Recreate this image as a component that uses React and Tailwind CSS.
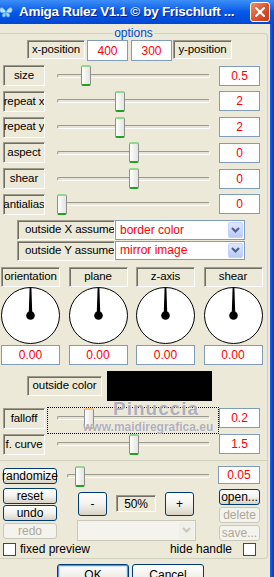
import React from 'react';

const sliders = [
  { label: 'size', thumb: 81, value: '0.5' },
  { label: 'repeat x', thumb: 115, value: '2' },
  { label: 'repeat y', thumb: 115, value: '2' },
  { label: 'aspect', thumb: 129, value: '0' },
  { label: 'shear', thumb: 129, value: '0' },
  { label: 'antialias', thumb: 57, value: '0' },
];

const dials = ['orientation', 'plane', 'z-axis', 'shear'];

const Sunken = ({ children, className = '' }) => (
  <div
    className={`flex items-center justify-center border border-t-[#9d9a8c] border-l-[#9d9a8c] border-b-white border-r-white shadow-[inset_1px_1px_0_#716f64] whitespace-nowrap overflow-hidden text-[11.5px] tracking-[-0.1px] ${className}`}
  >
    {children}
  </div>
);

const Edit = ({ children, className = '' }) => (
  <div
    className={`flex items-center justify-center bg-white border border-[#7f9db9] text-[#ff0000] text-[12px] ${className}`}
  >
    {children}
  </div>
);

const XpButton = ({ children, className = '', disabled = false }) => (
  <div
    className={`flex items-center justify-center rounded-[3px] border text-[12px] ${
      disabled
        ? 'border-[#c9c7ba] text-[#aca899] bg-[#f4f3ee]'
        : 'border-[#003c74] text-black bg-linear-to-b from-white via-[#f3f2ec] to-[#d8d3c6]'
    } ${className}`}
  >
    {children}
  </div>
);

// slider track; thumb x is in page pixels, offset is the slider's own left edge
const Slider = ({ width, trackLeft, trackWidth, thumb, offset, orange = false, focus = false }) => (
  <div className="relative flex items-center h-[21px]" style={{ width }}>
    <div
      className="h-[4px] rounded-[2px] border border-t-[#9c9a8e] border-l-[#9c9a8e] border-b-white border-r-white bg-[#e6e4d8]"
      style={{ marginLeft: trackLeft, width: trackWidth }}
    />
    <div
      className={`absolute top-0 w-[10px] h-[21px] rounded-[2px] border border-[#8e8f8f] border-t-2 border-b-2 bg-linear-to-r from-white to-[#e4e3dc] ${
        orange ? 'border-t-[#f7c86b] border-b-[#e49b1c]' : 'border-t-[#8ed98e] border-b-[#21a121]'
      }`}
      style={{ left: thumb - offset }}
    />
    {focus && <div className="absolute left-0 right-0 -top-[1px] -bottom-[5px] border border-dotted border-black" />}
  </div>
);

const Combo = ({ text, className = '', disabled = false }) => (
  <div
    className={`flex items-center border ${disabled ? 'border-[#c9c7ba] bg-[#f4f3ee]' : 'border-[#7f9db9] bg-white'} ${className}`}
  >
    <span className="flex-1 pl-[4px] text-[12px] text-[#ff0000] whitespace-nowrap">{text}</span>
    <div
      className={`mr-[1px] w-[15px] self-stretch my-[1px] rounded-[2px] flex items-center justify-center ${
        disabled ? 'bg-[#f0efe8]' : 'bg-linear-to-b from-[#dde8ff] to-[#b7caf5] border border-[#c3d3fd]'
      }`}
    >
      <svg width="9" height="6" viewBox="0 0 9 6">
        <path d="M1 1 L4.5 4.5 L8 1" fill="none" stroke={disabled ? '#c9c7ba' : '#4d6185'} strokeWidth="2" />
      </svg>
    </div>
  </div>
);

const Dial = () => (
  <svg width="59" height="57" viewBox="0 0 59 57">
    <ellipse cx="29.5" cy="28.5" rx="29" ry="28" fill="white" stroke="black" strokeWidth="1" />
    <polygon points="28.6,0.5 30.4,0.5 31.3,28 27.7,28" fill="black" />
    <circle cx="29.5" cy="28.5" r="4.3" fill="black" />
  </svg>
);

const Checkbox = () => <div className="w-[13px] h-[13px] border border-[#1c5180] bg-white" />;

export default function App() {
  return (
    <div className="relative w-[274px] h-[577px] overflow-hidden bg-[#ece9d8] flex flex-col font-['Liberation_Sans',Arial,sans-serif] text-[11px] text-black">
      {/* title bar */}
      <div className="h-[24px] flex items-center bg-linear-to-b from-[#3d8ef7] via-[#0558e8] to-[#0048d4] shrink-0">
        <svg width="14" height="14" viewBox="0 0 14 14" className="ml-[-1px] shrink-0">
          <path d="M7 7 C4 1 0 2 1 6 C1.5 8 4 8.5 7 7 Z" fill="#bfe3ff" stroke="#5aa9e8" strokeWidth="0.8" />
          <path d="M7 7 C3 8 2 12 5 12 C6.5 12 7 10 7 7 Z" fill="#9fd2fb" stroke="#5aa9e8" strokeWidth="0.8" />
          <path d="M7 7 C10 1 14 2 13 6 C12.5 8 10 8.5 7 7 Z" fill="#bfe3ff" stroke="#5aa9e8" strokeWidth="0.8" />
          <path d="M7 7 C11 8 12 12 9 12 C7.5 12 7 10 7 7 Z" fill="#9fd2fb" stroke="#5aa9e8" strokeWidth="0.8" />
        </svg>
        <span className="ml-[6px] flex-1 text-white font-bold text-[13.5px] tracking-[-0.3px] whitespace-nowrap overflow-hidden [text-shadow:1px_1px_0_#0a1e8a]">
          Amiga Rulez V1.1 © by Frischluft ...
        </span>
        <div className="mr-[4px] w-[20px] h-[20px] rounded-[3px] border border-white bg-linear-to-br from-[#ef8d6c] via-[#e0542b] to-[#c43b17] flex items-center justify-center shrink-0">
          <svg width="10" height="10" viewBox="0 0 10 10">
            <path d="M1 1 L9 9 M9 1 L1 9" stroke="white" strokeWidth="2.2" strokeLinecap="square" />
          </svg>
        </div>
      </div>

      <div className="flex flex-1 min-h-0">
        <div className="flex-1 flex flex-col">
          {/* options group */}
          <div className="mt-[9px] w-[268px] border-t border-r border-b border-[#d0d0bf] rounded-r-[4px] flex flex-col">
            <div className="-mt-[8px] h-[14px] flex justify-center">
              <span className="bg-[#ece9d8] px-[1px] text-[#0046d5] text-[12px] leading-[14px]">options</span>
            </div>

            <div className="flex h-[20px] ml-[27px]">
              <Sunken className="w-[58px] h-[19px]">x-position</Sunken>
              <Edit className="ml-[2px] w-[41px] h-[21px]">400</Edit>
              <Edit className="ml-[3px] w-[41px] h-[21px]">300</Edit>
              <Sunken className="ml-[1px] w-[59px] h-[19px]">y-position</Sunken>
            </div>

            <div className="mt-[5px] flex flex-col gap-[4.8px]">
              {sliders.map((s) => (
                <div key={s.label} className="flex items-center h-[21px]">
                  <Sunken className="ml-[3px] w-[42px] h-[21px]">{s.label}</Sunken>
                  <div className="ml-[2px]">
                    <Slider width={172} trackLeft={10} trackWidth={153} thumb={s.thumb} offset={47} />
                  </div>
                  <Edit className="w-[41px] h-[20px]">{s.value}</Edit>
                </div>
              ))}
            </div>

            <div className="mt-[5px] flex h-[20px] ml-[17px]">
              <Sunken className="w-[98px] h-[20px] justify-start pl-[7px]">outside X assume</Sunken>
              <Combo text="border color" className="w-[130px] h-[20px]" />
            </div>
            <div className="mt-[1px] flex h-[20px] ml-[17px]">
              <Sunken className="w-[98px] h-[20px] justify-start pl-[7px]">outside Y assume</Sunken>
              <Combo text="mirror image" className="w-[130px] h-[19px]" />
            </div>

            <div className="mt-[6px] ml-[1px] grid grid-cols-[repeat(4,59px)] gap-x-[8.5px]">
              {dials.map((d) => (
                <div key={d} className="flex flex-col">
                  <Sunken className="h-[20px]">{d}</Sunken>
                  <Dial />
                  <Edit className="mt-[1px] h-[20px]">0.00</Edit>
                </div>
              ))}
            </div>

            <div className="mt-[6px] flex items-center h-[30px]">
              <Sunken className="ml-[27px] w-[75px] h-[20px]">outside color</Sunken>
              <div className="ml-[5px] w-[105px] h-[30px] bg-black" />
            </div>

            <div className="mt-[7px] flex flex-col gap-[5px]">
              <div className="flex items-center h-[21px]">
                <Sunken className="ml-[3px] w-[42px] h-[21px]">falloff</Sunken>
                <div className="ml-[2px]">
                  <Slider width={172} trackLeft={10} trackWidth={153} thumb={84} offset={47} orange focus />
                </div>
                <Edit className="w-[41px] h-[20px]">0.2</Edit>
              </div>
              <div className="flex items-center h-[21px]">
                <Sunken className="ml-[3px] w-[42px] h-[21px]">f. curve</Sunken>
                <div className="ml-[2px]">
                  <Slider width={172} trackLeft={10} trackWidth={153} thumb={129} offset={47} />
                </div>
                <Edit className="w-[41px] h-[20px]">1.5</Edit>
              </div>
            </div>

            {/* lower section */}
            <div className="mt-[5px] border-t border-[#d0d0bf] flex">
              <div className="ml-[3px] w-[54px] flex flex-col">
                <XpButton className="mt-[7px] h-[16px]">randomize</XpButton>
                <XpButton className="mt-[4px] h-[16px]">reset</XpButton>
                <XpButton className="mt-[1px] h-[16px]">undo</XpButton>
                <XpButton className="mt-[2px] h-[16px]" disabled>redo</XpButton>
              </div>
              <div className="w-[161px] flex flex-col">
                <div className="mt-[5px]">
                  <Slider width={161} trackLeft={10} trackWidth={143} thumb={75} offset={57} />
                </div>
                <div className="mt-[5px] flex items-center h-[24px]">
                  <XpButton className="ml-[21px] w-[29px] h-[24px]">-</XpButton>
                  <Sunken className="ml-[9px] w-[40px] h-[17px] text-[12px]">50%</Sunken>
                  <XpButton className="ml-[9px] w-[29px] h-[24px]">+</XpButton>
                </div>
                <Combo text="" disabled className="mt-[4px] ml-[20px] w-[119px] h-[21px]" />
              </div>
              <div className="flex flex-col">
                <Edit className="mt-[5px] w-[42px] h-[18px]">0.05</Edit>
                <XpButton className="mt-[5px] ml-[1px] w-[41px] h-[16px]">open...</XpButton>
                <XpButton className="mt-[2px] ml-[1px] w-[41px] h-[16px]" disabled>delete</XpButton>
                <XpButton className="mt-[2px] ml-[1px] w-[41px] h-[16px]" disabled>save...</XpButton>
              </div>
            </div>

            <div className="mt-[2px] mb-[2px] flex items-center h-[13px]">
              <div className="ml-[3px]"><Checkbox /></div>
              <span className="ml-[4px] text-[12px]">fixed preview</span>
              <span className="ml-auto text-[12px]">hide handle</span>
              <div className="ml-[11px] mr-[11px]"><Checkbox /></div>
            </div>
          </div>

          <div className="mt-[5px] flex">
            <div className="ml-[57px] w-[72px] h-[23px] rounded-[3px] border border-[#003c74] shadow-[inset_0_0_0_1px_#6a8fe8,inset_0_0_0_2px_#cee7ff] bg-linear-to-b from-white to-[#e3e0d6] flex items-center justify-center text-[12px]">
              OK
            </div>
            <XpButton className="ml-[3px] w-[72px] h-[23px]">Cancel</XpButton>
          </div>
        </div>
        <div className="w-[4px] bg-linear-to-r from-[#1a63e8] to-[#0633c4]" />
      </div>

      {/* watermark over the dialog */}
      <div className="absolute left-[113px] top-[395px] text-[19px] font-bold tracking-[1px] text-[#9a9aaa]/80 [text-shadow:0_0_1px_white] pointer-events-none">
        Pinuccia
      </div>
      <div className="absolute left-[83px] top-[418px] text-[12px] font-bold text-[#9a9aaa]/80 [text-shadow:0_0_1px_white] pointer-events-none">
        www.maidiregrafica.eu
      </div>
    </div>
  );
}
